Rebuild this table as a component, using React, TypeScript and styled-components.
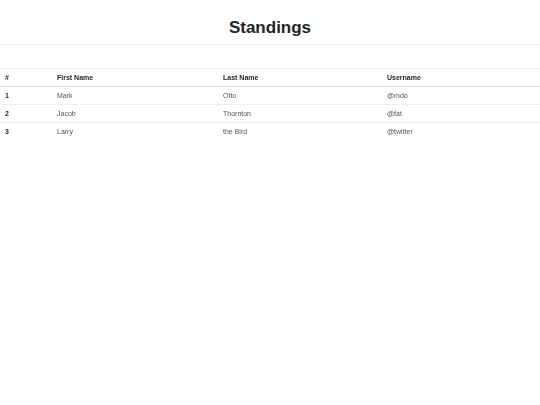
import styled, { createGlobalStyle } from "styled-components";

const GlobalStyle = createGlobalStyle`
    body {
        margin: 0;
        background: #fff;
        font-family: "Liberation Sans", Arial, sans-serif;
        color: #212529;
        -webkit-font-smoothing: antialiased;
    }
`;

type Player = { id: number; first: string; last: string; handle: string };

const players: Player[] = [
    { id: 1, first: "Mark", last: "Otto", handle: "@mdo" },
    { id: 2, first: "Jacob", last: "Thornton", handle: "@fat" },
    { id: 3, first: "Larry", last: "the Bird", handle: "@twitter" },
];

const columns = [
    { label: "#", width: 52 },
    { label: "First Name", width: 166 },
    { label: "Last Name", width: 164 },
    { label: "Username", width: 158 },
];

function App() {
    return (
        <>
            <GlobalStyle />
            <Header>
                <Title>Standings</Title>
            </Header>
            <Table>
                <colgroup>
                    {columns.map((c) => (
                        <col key={c.label} style={{ width: c.width }} />
                    ))}
                </colgroup>
                <thead>
                    <tr>
                        {columns.map((c) => (
                            <Th key={c.label}>{c.label}</Th>
                        ))}
                    </tr>
                </thead>
                <tbody>
                    {players.map((p) => (
                        <tr key={p.id}>
                            <Td $strong>{p.id}</Td>
                            <Td>{p.first}</Td>
                            <Td>{p.last}</Td>
                            <Td>{p.handle}</Td>
                        </tr>
                    ))}
                </tbody>
            </Table>
        </>
    );
}

const Header = styled.header`
    display: flex;
    justify-content: center;
    align-items: flex-start;
    box-sizing: border-box;
    height: 45px;
    padding-top: 18px;
    border-bottom: 1px solid #eeeeee;
    margin-bottom: 23px;
`;

const Title = styled.h1`
    margin: 0;
    font-size: 17px;
    line-height: 20px;
    font-weight: 700;
    color: #212529;
`;

const Table = styled.table`
    width: 540px;
    border-collapse: collapse;
    table-layout: fixed;
    border-top: 1px solid #eeeeee;
    filter: grayscale(100%);
`;

const Th = styled.th`
    text-align: left;
    font-size: 7px;
    font-weight: 700;
    color: #212529;
    height: 17px;
    padding: 0 5px;
    border-bottom: 1px solid #dcdcdc;
`;

const Td = styled.td<{ $strong?: boolean }>`
    font-size: 7px;
    font-weight: ${(p) => (p.$strong ? 700 : 400)};
    color: ${(p) => (p.$strong ? "#212529" : "#555")};
    height: 17px;
    padding: 0 5px;
    border-bottom: 1px solid #eeeeee;

    tr:last-child > & {
        border-bottom: none;
    }
`;

export default App;
